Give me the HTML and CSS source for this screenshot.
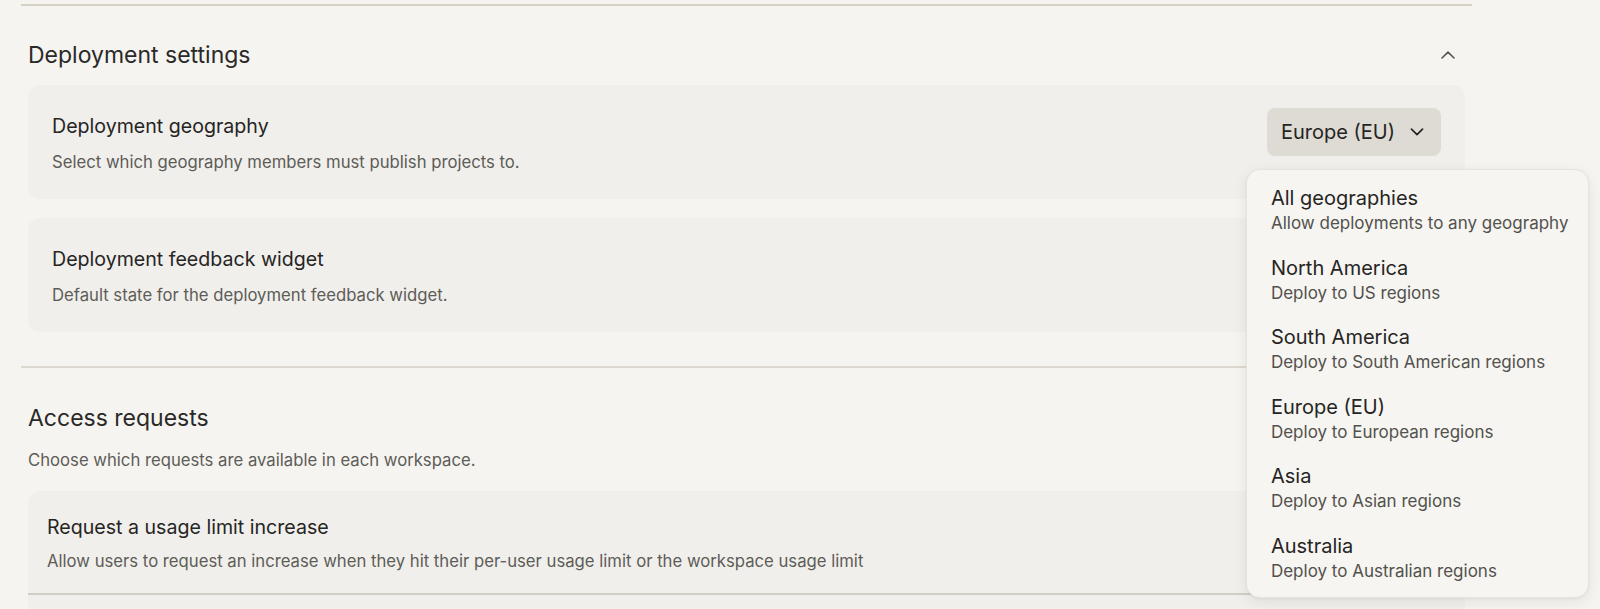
FILE: index.html
```html
<!DOCTYPE html>
<html lang="en">
<head>
<meta charset="utf-8">
<title>Organization settings</title>
<link rel="stylesheet" href="styles.css">
</head>
<body>
<main class="page">
  <div class="rule"></div>

  <section class="section">
    <header class="section-head">
      <h2 class="section-title">Deployment settings</h2>
      <button class="collapse" aria-label="Collapse section">
        <svg width="14" height="8" viewBox="0 0 14 8"><path d="M1 7L7 1.2L13 7" fill="none" stroke="currentColor" stroke-width="1.6" stroke-linecap="round" stroke-linejoin="round"/></svg>
      </button>
    </header>

    <div class="card">
      <div class="card-text">
        <div class="card-title">Deployment geography</div>
        <div class="card-desc">Select which geography members must publish projects to.</div>
      </div>
      <div class="select-wrap">
        <button class="select">
          <span>Europe (EU)</span>
          <svg width="14" height="8" viewBox="0 0 14 8"><path d="M1.5 1.2L7 6.6L12.5 1.2" fill="none" stroke="currentColor" stroke-width="1.7" stroke-linecap="round" stroke-linejoin="round"/></svg>
        </button>
        <ul class="menu">
          <li class="menu-item"><div class="menu-title">All geographies</div><div class="menu-sub">Allow deployments to any geography</div></li>
          <li class="menu-item"><div class="menu-title">North America</div><div class="menu-sub">Deploy to US regions</div></li>
          <li class="menu-item"><div class="menu-title">South America</div><div class="menu-sub">Deploy to South American regions</div></li>
          <li class="menu-item"><div class="menu-title">Europe (EU)</div><div class="menu-sub">Deploy to European regions</div></li>
          <li class="menu-item"><div class="menu-title">Asia</div><div class="menu-sub">Deploy to Asian regions</div></li>
          <li class="menu-item"><div class="menu-title">Australia</div><div class="menu-sub">Deploy to Australian regions</div></li>
        </ul>
      </div>
    </div>

    <div class="card">
      <div class="card-text">
        <div class="card-title">Deployment feedback widget</div>
        <div class="card-desc">Default state for the deployment feedback widget.</div>
      </div>
    </div>
  </section>

  <div class="rule rule-mid"></div>

  <section class="section">
    <header class="section-head section-head-next">
      <h2 class="section-title">Access requests</h2>
      <button class="collapse" aria-label="Collapse section">
        <svg width="14" height="8" viewBox="0 0 14 8"><path d="M1 7L7 1.2L13 7" fill="none" stroke="currentColor" stroke-width="1.6" stroke-linecap="round" stroke-linejoin="round"/></svg>
      </button>
    </header>
    <p class="section-desc">Choose which requests are available in each workspace.</p>

    <div class="group">
      <div class="group-row">
        <div class="card-title">Request a usage limit increase</div>
        <div class="card-desc">Allow users to request an increase when they hit their per-user usage limit or the workspace usage limit</div>
      </div>
      <div class="group-row group-row-next"></div>
    </div>
  </section>
</main>
</body>
</html>
```

FILE: styles.css
```css
* {
  box-sizing: border-box;
}

html, body {
  margin: 0;
  height: 100%;
  overflow: hidden;
}

body {
  background: #f5f4f1;
  color: #2a2927;
  font-family: Inter, "Noto Sans", "Liberation Sans", sans-serif;
}

.page {
  width: 1451px;
  margin-left: 21px;
  padding-top: 4px;
}

.rule {
  height: 2px;
  background: #d7d0c5;
}

.rule-mid {
  margin-top: 34px;
  background: #ddd8cf;
}

.section {
  padding: 0 7px;
}

.section-head {
  display: flex;
  align-items: center;
  justify-content: space-between;
  padding: 35px 10px 0 0;
  margin-bottom: 16px;
}

.section-head-next {
  padding-top: 36px;
}

.section-title {
  margin: 0;
  font-size: 23px;
  line-height: 28px;
  font-weight: 400;
  color: #2a2927;
}

.collapse {
  display: flex;
  align-items: center;
  justify-content: center;
  padding: 0;
  border: 0;
  background: none;
  color: #57564f;
}

.section-desc {
  margin: 1px 0 19px;
  font-size: 16.7px;
  line-height: 24px;
  color: #5d5c57;
}

.card {
  display: flex;
  align-items: flex-start;
  justify-content: space-between;
  min-height: 114px;
  padding: 23px 24px 24px;
  margin-bottom: 19px;
  background: #f0efec;
  border-radius: 12px;
}

.card-text {
  padding-top: 4px;
}

.card-title {
  font-size: 19.6px;
  line-height: 28px;
  color: #262523;
}

.card-desc {
  margin-top: 10px;
  font-size: 16.7px;
  line-height: 24px;
  color: #5d5c57;
}

.select-wrap {
  position: relative;
}

.select {
  display: flex;
  align-items: center;
  gap: 15px;
  height: 48px;
  padding: 0 17px 0 14px;
  border: 0;
  border-radius: 8px;
  background: #dddbd4;
  color: #262523;
  font-family: inherit;
  font-size: 20px;
}

/* open geography picker, floating below its button */
.menu {
  position: absolute;
  top: 61px;
  left: -21px;
  width: 343px;
  margin: 0;
  padding: 6px 0 4px;
  list-style: none;
  background: #f6f5f2;
  border: 1px solid #e7e4de;
  border-radius: 14px;
  box-shadow: 0 4px 14px rgba(40, 35, 25, 0.08), 0 1px 3px rgba(40, 35, 25, 0.05);
  z-index: 10;
}

.menu-item {
  height: 69.5px;
  padding: 9px 20px 0 24px;
  white-space: nowrap;
}

.menu-title {
  font-size: 20px;
  line-height: 26px;
  color: #262523;
}

.menu-sub {
  font-size: 17px;
  line-height: 24px;
  color: #52514c;
}

.group {
  background: #f0efec;
  border-radius: 12px 12px 0 0;
}

.group-row {
  padding: 22px 19px 20px;
  border-bottom: 2px solid #d2cec6;
}

.group-row .card-desc {
  margin-top: 8px;
}

.group-row-next {
  height: 80px;
  border-bottom: 0;
}
```
